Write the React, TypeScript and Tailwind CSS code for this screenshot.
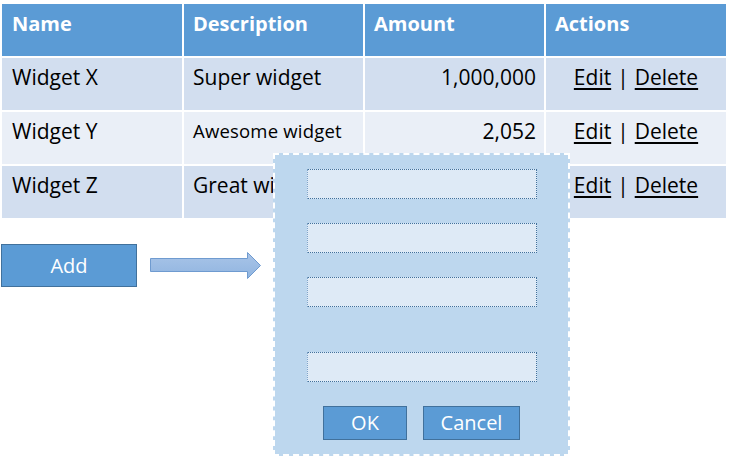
import React from 'react';

const rows = [
  { name: 'Widget X', description: 'Super widget', amount: '1,000,000', bg: 'bg-[#d2deef]', small: false },
  { name: 'Widget Y', description: 'Awesome widget', amount: '2,052', bg: 'bg-[#eaeff7]', small: true },
  { name: 'Widget Z', description: 'Great widget', amount: '999', bg: 'bg-[#d2deef]', small: false },
];

const inputClass = 'w-[230px] h-[30px] bg-[#deeaf6] border border-dotted border-[#41719c] border-l-solid border-l-[#7fa3c8]';

export default function App() {
  return (
    <div className="relative w-[730px] h-[456px] bg-white overflow-hidden text-black" style={{ fontFamily: '"Open Sans", "Liberation Sans", sans-serif' }}>
      {/* table */}
      <div className="pt-[4px] pl-[2px] grid grid-cols-[180px_179px_179px_180px] gap-[2px]">
        <div className="h-[52px] bg-[#5b9bd5] px-[10px] pt-[5px] text-[20px] font-bold text-white">Name</div>
        <div className="h-[52px] bg-[#5b9bd5] px-[9px] pt-[5px] text-[20px] font-bold text-white">Description</div>
        <div className="h-[52px] bg-[#5b9bd5] px-[9px] pt-[5px] text-[20px] font-bold text-white">Amount</div>
        <div className="h-[52px] bg-[#5b9bd5] px-[9px] pt-[5px] text-[20px] font-bold text-white">Actions</div>
        {rows.map((r) => (
          <React.Fragment key={r.name}>
            <div className={`h-[52px] ${r.bg} px-[10px] pt-[4px] text-[21px]`}>{r.name}</div>
            <div className={`h-[52px] ${r.bg} px-[9px] ${r.small ? 'text-[18.5px] pt-[5px] tracking-[0.2px]' : 'text-[21px] pt-[4px]'}`}>{r.description}</div>
            <div className={`h-[52px] ${r.bg} pr-[8px] pt-[4px] text-[21px] text-right`}>{r.amount}</div>
            <div className={`h-[52px] ${r.bg} pt-[4px] text-[21px] text-center`}>
              <a className="underline decoration-2 underline-offset-[3px]">Edit</a>
              <span className="mx-[6px]">|</span>
              <a className="underline decoration-2 underline-offset-[3px]">Delete</a>
            </div>
          </React.Fragment>
        ))}
      </div>

      {/* add + arrow */}
      <div className="mt-[26px] pl-[1px] flex items-center gap-[13px]">
        <button className="w-[136px] h-[43px] bg-[#5b9bd5] border border-[#41719c] text-white text-[20px]">Add</button>
        <svg width="112" height="27" viewBox="0 0 112 27">
          <defs>
            <linearGradient id="arr" x1="0" y1="0" x2="0" y2="1">
              <stop offset="0" stopColor="#a9c4e8" />
              <stop offset="1" stopColor="#90b5e0" />
            </linearGradient>
          </defs>
          <path d="M0.5 6.5 H97.5 V0.5 L110.5 13.5 L97.5 26.5 V19.5 H0.5 Z" fill="url(#arr)" stroke="#6f9bd0" strokeWidth="1" />
        </svg>
      </div>

      {/* dialog */}
      <div className="absolute left-[273px] top-[153px] w-[297px] h-[303px] bg-[#bdd7ee] border-2 border-dashed border-white flex flex-col items-center pt-[14px]">
        <div className={inputClass} />
        <div className={`${inputClass} mt-[24px]`} />
        <div className={`${inputClass} mt-[24px]`} />
        <div className={`${inputClass} mt-[45px]`} />
        <div className="mt-[24px] flex gap-[16px]">
          <button className="w-[84px] h-[34px] bg-[#5b9bd5] border border-[#41719c] text-white text-[20px] leading-none">OK</button>
          <button className="w-[97px] h-[34px] bg-[#5b9bd5] border border-[#41719c] text-white text-[20px] leading-none">Cancel</button>
        </div>
      </div>
    </div>
  );
}
